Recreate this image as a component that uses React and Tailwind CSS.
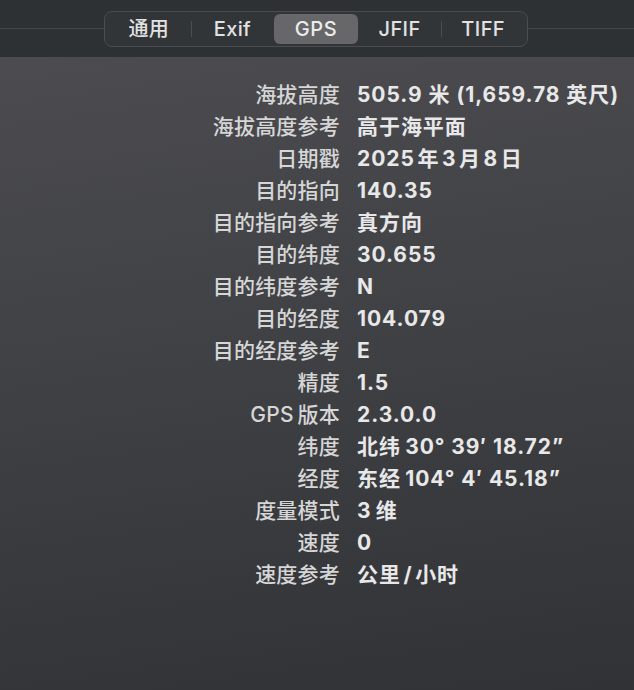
const tabs = ["通用", "Exif", "GPS", "JFIF", "TIFF"];
const selected = 2;

// thin / hair spaces between CJK and Latin, like the macOS inspector
const rows = [
  ["海拔高度", "505.9 米 (1,659.78 英尺)"],
  ["海拔高度参考", "高于海平面"],
  ["日期戳", "2025\u200a年\u200a3\u200a月\u200a8\u200a日"],
  ["目的指向", "140.35"],
  ["目的指向参考", "真方向"],
  ["目的纬度", "30.655"],
  ["目的纬度参考", "N"],
  ["目的经度", "104.079"],
  ["目的经度参考", "E"],
  ["精度", "1.5"],
  ["GPS\u2009版本", "2.3.0.0"],
  ["纬度", "北纬\u200930° 39′ 18.72”"],
  ["经度", "东经\u2009104° 4′ 45.18”"],
  ["度量模式", "3\u2009维"],
  ["速度", "0"],
  ["速度参考", "公里\u200a/\u200a小时"],
];

export default function App() {
  return (
    <div className="w-[634px] h-[690px] flex flex-col overflow-hidden font-['Inter','Noto_Sans_CJK_SC',sans-serif] antialiased">
      {/* toolbar */}
      <div className="relative h-[57px] bg-[#2e3134] flex items-start justify-center pt-[11px]">
        <div className="absolute left-0 right-0 top-[28px] h-px bg-[#45474a]" />
        <div className="relative z-10 flex w-[424px] h-[36px] rounded-[8px] border border-[#4a4c4f] bg-[#323538] p-[2px] -translate-x-[1px]">
          {tabs.map((t, i) => {
            const showSep = i > 0 && i !== selected && i - 1 !== selected;
            return (
              <div key={t} className="relative flex-1 flex">
                {showSep && (
                  <div className="absolute left-0 top-[7px] bottom-[7px] w-px bg-[#4c4d50]" />
                )}
                <div
                  className={
                    i === selected
                      ? "flex-1 flex items-center justify-center rounded-[6px] bg-[#676769] text-[20px] tracking-[0.03em] text-[#ececec] font-medium"
                      : "flex-1 flex items-center justify-center text-[20px] tracking-[0.02em] text-[#e2e2e2] font-medium"
                  }
                >
                  {t}
                </div>
              </div>
            );
          })}
        </div>
      </div>

      {/* content */}
      <div className="flex-1 bg-[linear-gradient(172deg,#4b4b50_0%,#404145_45%,#313236_100%)] pt-[21px]">
        {rows.map(([k, v]) => (
          <div key={k} className="flex h-[32px] items-center text-[21px] leading-none">
            <div className="w-[340px] text-right text-[#d6d6d6] font-medium tracking-[0.01em]">{k}</div>
            <div className="pl-[17px] text-[#e8e8e8] font-bold tracking-[0.045em] whitespace-nowrap">{v}</div>
          </div>
        ))}
      </div>
    </div>
  );
}
